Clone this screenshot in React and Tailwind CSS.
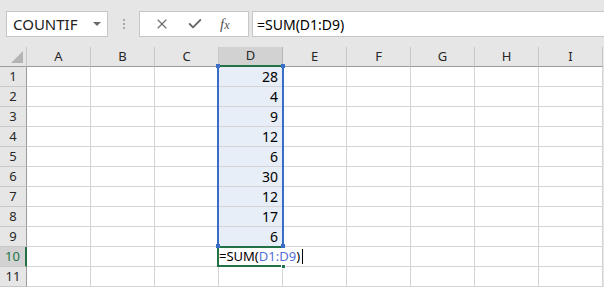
import { X, Check } from "lucide-react";

const cols = ["A", "B", "C", "D", "E", "F", "G", "H", "I"];
const values = { 1: 28, 2: 4, 3: 9, 4: 12, 5: 6, 6: 30, 7: 12, 8: 17, 9: 6 };
const rows = [1, 2, 3, 4, 5, 6, 7, 8, 9, 10, 11, 12];

const font = { fontFamily: '"Noto Sans", "Open Sans", sans-serif' };

function HeaderRow() {
  return (
    <div className="flex h-[20px]">
      <div className="w-[27px] shrink-0 h-full bg-[#e6e6e6] border-r border-b border-[#c8c8c8] border-b-[#9b9b9b] flex items-end justify-end pr-[3px] pb-[3px]">
        <div className="w-0 h-0 border-l-[12px] border-l-transparent border-b-[12px] border-b-[#b4b4b4]" />
      </div>
      {cols.map((c) =>
        c === "D" ? (
          <div
            key={c}
            className="w-[64px] shrink-0 h-full bg-[#d2d2d2] border-r border-[#b8b8b8] border-b-2 border-b-[#217346] flex items-center justify-center text-[13px] text-[#262626]"
          >
            {c}
          </div>
        ) : (
          <div
            key={c}
            className="w-[64px] shrink-0 h-full bg-[#e6e6e6] border-r border-b border-[#c8c8c8] border-b-[#9b9b9b] flex items-center justify-center text-[13px] text-[#262626]"
          >
            {c}
          </div>
        )
      )}
    </div>
  );
}

function Row({ r }) {
  const active = r === 10;
  return (
    <div className="flex h-[20px]">
      <div
        className={
          active
            ? "w-[27px] shrink-0 h-full bg-[#d2d2d2] border-r-2 border-r-[#217346] border-b border-b-[#c8c8c8] flex items-center justify-center text-[13px] text-[#217346]"
            : "w-[27px] shrink-0 h-full bg-[#e6e6e6] border-r border-r-[#9b9b9b] border-b border-b-[#c8c8c8] flex items-center justify-center text-[13px] text-[#262626]"
        }
      >
        {r <= 11 ? r : ""}
      </div>
      {cols.map((c) => {
        const inRange = c === "D" && r <= 9;
        return (
          <div
            key={c}
            className={
              inRange
                ? "w-[64px] shrink-0 h-full bg-[#e8eef8] border-r border-b border-[#d4d4d4] flex items-center justify-end pr-[4px] text-[14px] text-black"
                : "w-[64px] shrink-0 h-full bg-white border-r border-b border-[#d4d4d4] flex items-center justify-end pr-[4px] text-[14px] text-black"
            }
          >
            {inRange ? values[r] : ""}
          </div>
        );
      })}
    </div>
  );
}

export default function App() {
  return (
    <div className="w-[604px] h-[287px] overflow-hidden bg-[#e6e6e6] flex flex-col" style={font}>
      {/* FORMULA BAR */}
      <div className="h-[47px] shrink-0 flex items-start pt-[11px] pl-[6px]">
        <div className="w-[102px] h-[26px] bg-white border border-[#c6c6c6] flex items-center justify-between pl-[6px] pr-[6px] text-[15px] text-[#222]">
          <span>COUNTIF</span>
          <div className="w-0 h-0 border-l-[4px] border-r-[4px] border-t-[4px] border-l-transparent border-r-transparent border-t-[#6b6b6b]" />
        </div>
        <div className="w-[31px] h-[26px] flex flex-col items-center justify-center gap-[2px]">
          <div className="w-[2px] h-[2px] bg-[#a8a8a8]" />
          <div className="w-[2px] h-[2px] bg-[#a8a8a8]" />
          <div className="w-[2px] h-[2px] bg-[#a8a8a8]" />
        </div>
        <div className="w-[110px] h-[26px] bg-white border border-[#c6c6c6] flex items-center pl-[14px] gap-[17px] text-[#6a6a6a]">
          <X size={16} strokeWidth={1.7} />
          <Check size={16} strokeWidth={2.8} />
          <span className="text-[15px] italic text-[#555]" style={{ fontFamily: '"Liberation Serif", serif' }}>
            f<span className="text-[12px]">x</span>
          </span>
        </div>
        <div className="ml-[3px] flex-1 h-[26px] bg-white border border-r-0 border-[#c6c6c6] flex items-center pl-[4px] text-[14px] text-black">
          =SUM(D1:D9)
        </div>
      </div>

      {/* GRID */}
      <div className="relative flex-1">
        <HeaderRow />
        {rows.map((r) => (
          <Row key={r} r={r} />
        ))}

        {/* range border D1:D9 */}
        <div className="absolute left-[217px] top-[19px] w-[67px] h-[181px] border-l-2 border-r-2 border-[#3a6ec6] pointer-events-none" />
        <div className="absolute left-[216px] top-[17px] w-[4px] h-[4px] bg-[#3a6ec6]" />
        <div className="absolute left-[281px] top-[17px] w-[4px] h-[4px] bg-[#3a6ec6]" />

        {/* active cell D10 (edit mode) */}
        <div className="absolute left-[217px] top-[199px] w-[67px] h-[21px] border-l-2 border-t-2 border-b-2 border-[#217346]" />
        <div className="absolute left-[219px] top-[201px] h-[17px] pr-[1px] bg-white flex items-center whitespace-nowrap text-[13px] text-black">
          <span>=SUM(</span>
          <span className="text-[#5470d6]">D1:D9</span>
          <span>)</span>
          <span className="ml-[2px] w-[1px] h-[15px] bg-black shrink-0" />
        </div>
        <div className="absolute left-[216px] top-[197px] w-[4px] h-[4px] bg-[#3a6ec6]" />
        <div className="absolute left-[281px] top-[197px] w-[4px] h-[4px] bg-[#3a6ec6]" />
        <div className="absolute left-[281px] top-[217px] w-[5px] h-[5px] bg-[#217346] border border-white" />
      </div>
    </div>
  );
}
